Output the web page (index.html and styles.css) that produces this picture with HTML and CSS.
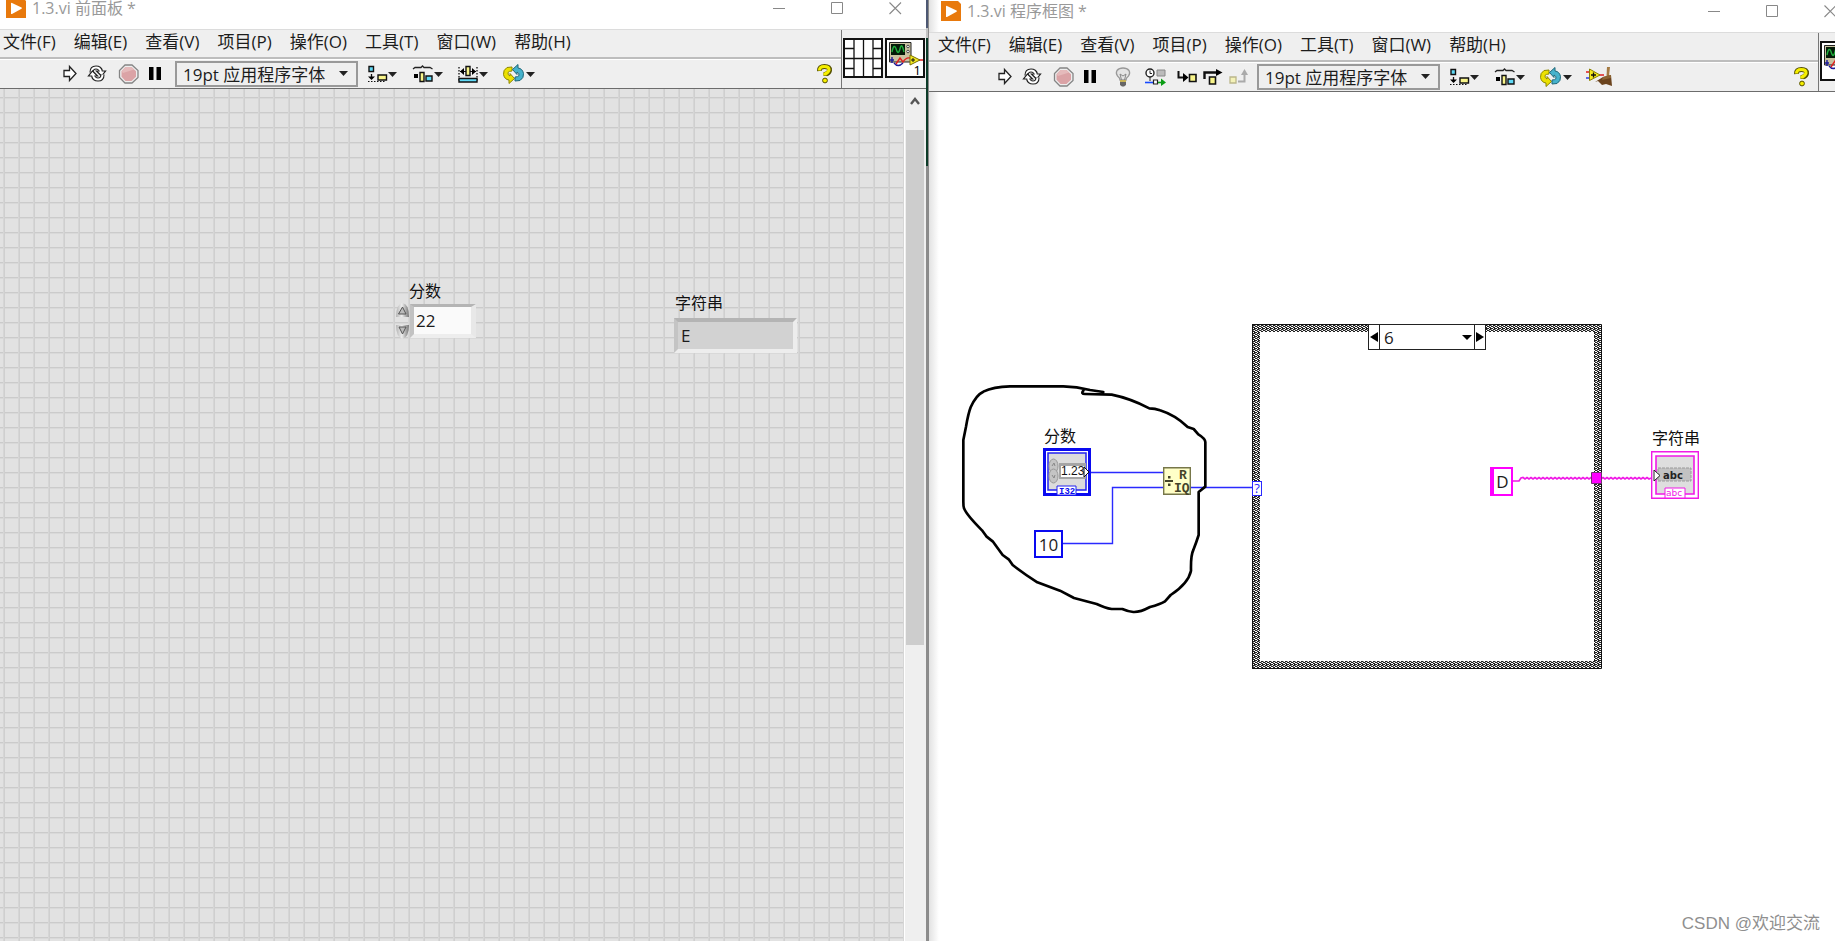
FILE: index.html
```html
<!DOCTYPE html>
<html lang="zh-CN">
<head>
<meta charset="utf-8">
<title>1.3.vi</title>
<link rel="stylesheet" href="styles.css">
</head>
<body>
<svg class="defs" aria-hidden="true">
  <defs>
    <g id="i-logo"><path d="M0 0H17L20 3V20H0Z" fill="#e8790c"/><path d="M5 5.500Q5 4.500 6 5L15.500 9.500Q16.500 10 15.500 10.800L6 16Q5 16.300 5 15.500Z" fill="#fff"/></g>
    <path id="i-run" d="M1 5.500H6.500V1.500L13 8.500L6.500 15.500V11.500H1Z" fill="#fff" stroke="#222" stroke-width="1.300"/>
    <g id="i-loop-half"><path d="M4.500 7.500Q4.500 2.500 9 2.500Q13 2.500 14 6" fill="none" stroke="#222" stroke-width="4.200"/><path d="M9.500 6H18.500L14.500 11Z" fill="#fff" stroke="#222" stroke-width="1.200"/><path d="M4.500 7.500Q4.500 2.500 9 2.500Q13 2.500 14 7" fill="none" stroke="#fff" stroke-width="2"/></g>
    <g id="i-loop"><use href="#i-loop-half"/><use href="#i-loop-half" transform="rotate(180 10 8.500)"/></g>
    <g id="i-stop"><path d="M8 1H15L21 6.500V13.500L15 19H8L2.500 13.500V6.500Z" fill="#eee" stroke="#858585" stroke-width="1.300"/><path d="M8.500 3H14.500L19 7.200V12.800L14.500 17H8.500L4.500 12.800V7.200Z" fill="#dba3a6"/><path d="M8.500 3H14.500L17 5.500L6 9L4.500 7.200Z" fill="#e5babb"/></g>
    <path id="i-pause" d="M0 0H4.500V13H0ZM7.500 0H12V13H7.500Z" fill="#000"/>
    <path id="i-down" d="M0 0H9L4.500 5Z" fill="#222"/>
    <g id="i-align"><path d="M1 1.500H5.500V6.500H1Z" fill="#5fd8f5" stroke="#111" stroke-width="1.400"/><path d="M3.500 9V14" stroke="#111" stroke-width="1.300"/><path d="M0 11.500H7L3.500 15Z"/><path d="M0 16.500H18" stroke="#111" stroke-dasharray="1.500 1.500"/><path d="M10 10H18.500V15H10Z" fill="#f8f48a" stroke="#111" stroke-width="1.400"/><use href="#i-down" x="20" y="7"/></g>
    <g id="i-dist"><path d="M0 4L2 2.500H8L9.500 1L11 2.500H17L19.500 4" fill="none" stroke="#222" stroke-width="1.300"/><path d="M1 9H5V13H1Z"/><path d="M7 7.500H11V16.500H7Z" fill="#f8f48a" stroke="#111" stroke-width="1.400"/><path d="M13 11H19V16H13Z" fill="#5fd8f5" stroke="#111" stroke-width="1.400"/><use href="#i-down" x="21" y="7"/></g>
    <g id="i-resize"><path d="M1 2V17M19 2V17" stroke="#111" stroke-width="1.300" stroke-dasharray="1.500 1.500"/><path d="M2 6.500H18" stroke="#111"/><path d="M2 6.500L6 3V10ZM18 6.500L14 3V10Z"/><path d="M8 1.500H12V10.500H8Z" fill="#f8f48a" stroke="#111" stroke-width="1.400"/><path d="M1 13.500H19V17H1Z" fill="#5fd8f5" stroke="#111" stroke-width="1.400"/><use href="#i-down" x="21" y="7"/></g>
    <path id="i-order-half" d="M9 3L4 3.500Q0 6 .5 10.500Q1.500 15.500 6 16V19.500L11.500 14.500L7 9.500V12Q4.500 11 5 8.500Q6 7 9 7Z"/>
    <g id="i-order"><use href="#i-order-half" fill="#ece100" stroke="#8c8600"/><use href="#i-order-half" transform="rotate(180 10.500 10)" fill="#45b2cc" stroke="#1f6778"/><use href="#i-down" x="23" y="8"/></g>
    <g id="i-help"><path d="M2.500 7Q2 2.500 7.500 2.500Q13 2.500 12.500 6.500Q12 9 9 10V12" fill="none" stroke="#555000" stroke-width="5"/><path d="M2.500 6.500Q2.500 2.500 7.300 2.500Q12.200 2.500 12 6Q11.500 8.500 8 10V11.500" fill="none" stroke="#f5ee00" stroke-width="3.200"/><circle cx="8" cy="16.500" r="2.400" fill="#f5ee00" stroke="#555000"/></g>
    <g id="i-vi"><path d="M1 1H39V39H1Z" fill="#fff" stroke="#111" stroke-width="2"/><path d="M4.500 4.500H26V24H4.500Z" fill="#c9c2a0" stroke="#222"/><path d="M6 6H20V17H6Z" fill="#041a08"/><path d="M7 14Q9 4 11.500 12Q13.500 18 15.500 9Q17 5 19 14" fill="none" stroke="#1fae3b" stroke-width="1.400"/><circle cx="23" cy="8.500" r="1.300" fill="#fff" stroke="#444"/><circle cx="23" cy="13.500" r="1.300" fill="#fff" stroke="#444"/><path d="M7 19V25M5 22H9M9 25Q13 30 18 25" fill="none" stroke="#1a1a9c" stroke-width="1.400"/><path d="M11 26L15 20L18 24Q21 19 25 20M33 22H38" fill="none" stroke="#e02020" stroke-width="1.400"/><path d="M25 17L35 22L25 27Z" fill="#f4ea20" stroke="#7a7000"/><path d="M26 22H30M28 20V24" stroke="#111"/></g>
    <g id="i-close"><path d="M.5 .5L12 12M12 .5L.5 12" stroke="#888" stroke-width="1.100"/></g>
    <pattern id="weave" width="4" height="4" patternUnits="userSpaceOnUse"><path d="M0 0H4V4H0Z" fill="#222"/><path d="M0 1h1v1h-1ZM1 0h1v1h-1ZM2 2h1v1h-1ZM3 3h1v1h-1ZM0 3h1v1h-1Z" fill="#fff"/><path d="M1 2h1v1h-1ZM3 1h1v1h-1Z" fill="#999"/></pattern>
  </defs>
</svg>

<div class="desktop">
  <section class="window panel-window">
    <header class="titlebar">
      <svg class="logo" width="20" height="20"><use href="#i-logo"/></svg>
      <span class="title">1.3.vi 前面板 *</span>
      <div class="window-buttons">
        <button aria-label="最小化"><svg width="12" height="12"><path d="M0 6.500H12" stroke="#888"/></svg></button>
        <button aria-label="最大化"><svg width="12" height="12"><path d="M.5 .5H11.500V11.500H.5Z" fill="none" stroke="#888"/></svg></button>
        <button aria-label="关闭"><svg width="12" height="12"><use href="#i-close"/></svg></button>
      </div>
    </header>
    <div class="chrome">
      <div class="bars">
        <nav class="menubar">
          <button>文件(F)</button><button>编辑(E)</button><button>查看(V)</button><button>项目(P)</button><button>操作(O)</button><button>工具(T)</button><button>窗口(W)</button><button>帮助(H)</button>
        </nav>
        <div class="toolbar">
          <button aria-label="运行"><svg width="14" height="17"><use href="#i-run"/></svg></button>
          <button aria-label="连续运行"><svg width="20" height="17"><use href="#i-loop"/></svg></button>
          <button aria-label="中止"><svg width="22" height="20"><use href="#i-stop"/></svg></button>
          <button aria-label="暂停"><svg width="12" height="13"><use href="#i-pause"/></svg></button>
          <label class="font-picker spaced"><select aria-label="字体"><option>19pt 应用程序字体</option></select><svg width="9" height="5"><use href="#i-down"/></svg></label>
          <button aria-label="对齐"><svg width="35" height="18"><use href="#i-align"/></svg></button>
          <button aria-label="分布"><svg width="35" height="18"><use href="#i-dist"/></svg></button>
          <button aria-label="调整大小"><svg width="35" height="18"><use href="#i-resize"/></svg></button>
          <button aria-label="重新排序"><svg width="35" height="20"><use href="#i-order"/></svg></button>
          <button class="help" aria-label="帮助"><svg width="15" height="20"><use href="#i-help"/></svg></button>
        </div>
      </div>
      <div class="vi-pane">
        <svg width="40" height="40"><path d="M1 1H39V39H1Z" fill="#fff" stroke="#111" stroke-width="2"/><path d="M11 1V39M20.500 1V39M30 1V39M1 20.500H39M1 10.500H11M1 30.500H11M30 10.500H39M30 30.500H39" stroke="#111" stroke-width="1.300"/></svg>
        <div class="vi-icon"><svg width="40" height="40"><use href="#i-vi"/></svg><span>1</span></div>
      </div>
    </div>
    <main class="panel-body">
      <div class="grid">
        <label class="label score-label" for="score">分数</label>
        <div class="numeric">
          <svg width="15" height="38"><defs><linearGradient id="knob"><stop stop-color="#b4b4b4"/><stop offset=".45" stop-color="#eee"/><stop offset="1" stop-color="#757575"/></linearGradient></defs><path d="M1 15Q1 2 7.500 1Q14 2 14 15Z" fill="url(#knob)"/><path d="M1 23H14Q14 35 7.500 37Q1 35 1 23Z" fill="url(#knob)"/><path d="M3.500 12L7.500 5L11 12ZM4 25H11L7.500 32Z" fill="#bbb" stroke="#555"/></svg>
          <input id="score" value="22">
        </div>
        <label class="label string-label" for="result">字符串</label>
        <input id="result" class="string-out" value="E" readonly>
      </div>
      <div class="scrollbar">
        <button aria-label="向上滚动"><svg width="10" height="8"><path d="M1 7L5 2L9 7" fill="none" stroke="#555" stroke-width="2.400"/></svg></button>
        <div class="thumb"></div>
      </div>
    </main>
  </section>

  <div class="divider"></div>

  <section class="window diagram-window">
    <header class="titlebar">
      <svg class="logo" width="20" height="20"><use href="#i-logo"/></svg>
      <span class="title">1.3.vi 程序框图 *</span>
      <div class="window-buttons">
        <button aria-label="最小化"><svg width="12" height="12"><path d="M0 6.500H12" stroke="#888"/></svg></button>
        <button aria-label="最大化"><svg width="12" height="12"><path d="M.5 .5H11.500V11.500H.5Z" fill="none" stroke="#888"/></svg></button>
        <button aria-label="关闭"><svg width="12" height="12"><use href="#i-close"/></svg></button>
      </div>
    </header>
    <div class="chrome">
      <div class="bars">
        <nav class="menubar">
          <button>文件(F)</button><button>编辑(E)</button><button>查看(V)</button><button>项目(P)</button><button>操作(O)</button><button>工具(T)</button><button>窗口(W)</button><button>帮助(H)</button>
        </nav>
        <div class="toolbar">
          <button aria-label="运行"><svg width="14" height="17"><use href="#i-run"/></svg></button>
          <button aria-label="连续运行"><svg width="20" height="17"><use href="#i-loop"/></svg></button>
          <button aria-label="中止"><svg width="22" height="20"><use href="#i-stop"/></svg></button>
          <button aria-label="暂停"><svg width="12" height="13"><use href="#i-pause"/></svg></button>
          <button aria-label="高亮显示执行过程"><svg width="29" height="20"><path d="M14 13Q14 11 11.500 9Q9.500 6 11 3.500Q13 1 17 1Q21 1 23 3.500Q24.500 6 22.500 9Q20 11 20 13Z" fill="#e4e4e4" stroke="#999" stroke-width="1.300"/><path d="M15.500 13L14 7L17 9L20 7L18.500 13" fill="none" stroke="#888"/><path d="M14 13H20V15H14Z" fill="#c9b458"/><path d="M14 15H20V18L18 19.500H16L14 18Z" fill="#666"/></svg></button>
          <button aria-label="保存连线值"><svg width="22" height="18"><circle cx="5" cy="5" r="4" fill="#fff" stroke="#222" stroke-width="1.400"/><path d="M5 2.500V5.500H7" stroke="#222" fill="none"/><path d="M12 2H20V8H12Z" fill="#bbb" stroke="#888"/><path d="M5 9V13" stroke="#222"/><path d="M0 14.500H8" stroke="#1649ff" stroke-width="1.600"/><path d="M8.500 12H12.500V16H8.500Z" fill="#fff" stroke="#222" stroke-width="1.200"/><path d="M13 14.500H17" stroke="#0a9c14" stroke-width="1.600"/><path d="M16 10.500L21 14.500L16 18Z" fill="#0a9c14"/></svg></button>
          <div class="steps">
            <button aria-label="单步步入"><svg width="20" height="16"><path d="M1.500 2V8.500H8" fill="none" stroke="#111" stroke-width="2"/><path d="M6 4L11.500 8.500L6 13Z"/><path d="M12.500 5.500H19V12.500H12.500Z" fill="#f8f48a" stroke="#111" stroke-width="1.600"/></svg></button>
            <button aria-label="单步步过"><svg width="20" height="16"><path d="M1.500 10V3.500H15" fill="none" stroke="#111" stroke-width="2.400"/><path d="M13 0L19.500 3.500L13 7Z"/><path d="M6.500 8H12.500V15H6.500Z" fill="#f8f48a" stroke="#111" stroke-width="1.600"/></svg></button>
            <button aria-label="单步步出"><svg width="18" height="16"><path d="M1 8H7V14H1Z" fill="#f4f2b8" stroke="#bbb68a" stroke-width="1.300"/><path d="M9 12.500H15.500V5" fill="none" stroke="#aaa" stroke-width="2"/><path d="M12 6L15.500 0L19 6Z" fill="#aaa"/></svg></button>
          </div>
          <label class="font-picker"><select aria-label="字体"><option>19pt 应用程序字体</option></select><svg width="9" height="5"><use href="#i-down"/></svg></label>
          <button aria-label="对齐"><svg width="35" height="18"><use href="#i-align"/></svg></button>
          <button aria-label="分布"><svg width="35" height="18"><use href="#i-dist"/></svg></button>
          <button aria-label="重新排序"><svg width="35" height="20"><use href="#i-order"/></svg></button>
          <button aria-label="整理程序框图"><svg width="28" height="20"><path d="M1 5H5M14 8H19" stroke="#e02020" stroke-width="1.400"/><path d="M1 11H5" stroke="#2030e0" stroke-width="1.400"/><path d="M4.500 2L15 8L4.500 13.500Z" fill="#f4ea20" stroke="#8a8000"/><path d="M6 8H11M8.500 5.500V10.500" stroke="#111" stroke-width="1.300"/><path d="M22 0H25L24 9H21.500Z" fill="#a47a42"/><path d="M18 10L26 8L27 19L21 17L17 18L13 14L10 15Z" fill="#6b431d"/><path d="M18 10L26 8V11L17 13Z" fill="#8d6433"/></svg></button>
          <button class="help" aria-label="帮助"><svg width="15" height="20"><use href="#i-help"/></svg></button>
        </div>
      </div>
      <div class="vi-pane">
        <div class="vi-icon"><svg width="40" height="40"><use href="#i-vi"/></svg></div>
      </div>
    </div>
    <main class="diagram">
      <svg class="wires" width="800" height="560">
        <path d="M161 380.500H234M134 451.500H183.500V395.500H234M262 395.500H324" fill="none" stroke="#2a2aff" stroke-width="1.400"/>
        <g transform="translate(21 278) scale(.33333)"><path d="M400 62Q392 72 405 72L485 74Q540 85 598 115Q615 115 630 121Q675 135 713 171L731 177L745 193Q765 205 766 216V350L746 366V495Q738 520 730 540Q722 555 723 602Q715 640 662 675L645 694Q630 703 600 711Q570 727 550 726Q535 725 517 717H485Q465 714 440 702L372 684L330 662L262 637Q220 610 188 585L176 568L158 555L128 514L109 499L96 481Q50 435 42 415Q40 410 40 395V210L48 170Q55 130 62 112Q78 75 100 65Q130 50 180 49H340Q380 49 420 60L460 66" fill="none" stroke="#000" stroke-width="8" stroke-linejoin="round" stroke-linecap="round"/></g>
      </svg>

      <span class="label node-score-label">分数</span>
      <svg class="node-score" width="48" height="48"><path d="M1.500 1.500H46.500V46.500H1.500Z" fill="#fff" stroke="#0a0af0" stroke-width="3"/><path d="M5 5H43V42H5Z" fill="#dcdcdc" stroke="#2222f0" stroke-width="1.500"/><path d="M16 15H43V31H16Z" fill="#a5a5a5"/><path d="M18 18H41V29H18Z" fill="#fff"/><ellipse cx="10.500" cy="18" rx="4.500" ry="7" fill="#c4c4c4" stroke="#999"/><ellipse cx="10.500" cy="28" rx="4.500" ry="7" fill="#c4c4c4" stroke="#999"/><path d="M9 18L11 15L12 18M9 27L11 30L12 27" fill="none" stroke="#888"/><path d="M41 19L46 24L41 29Z" fill="#fff" stroke="#111"/><path d="M14 38H33V47H14Z" fill="#fff" stroke="#2222f0"/><text class="t-numeric" x="18" y="27">1.23</text><text class="t-type" x="16" y="46">I32</text></svg>
      <input class="const-ten" aria-label="常量" value="10">
      <svg class="node-divide" width="28" height="28"><path d="M.7 .7H27.300V27.300H.7Z" fill="#ffffc8" stroke="#77774a" stroke-width="1.400"/><path d="M2 14H10" stroke="#44442a" stroke-width="2"/><path d="M5 9h2.500v2.500h-2.500ZM5 16.500h2.500v2.500h-2.500Z" fill="#44442a"/><text class="t-fn" x="16" y="12">R</text><text class="t-fn" x="11" y="25">IQ</text></svg>

      <div class="case">
        <svg class="case-frame" width="350" height="345"><path d="M0 0H350V345H0ZM8 8V337H342V8Z" fill="url(#weave)" fill-rule="evenodd"/><path d="M.5 .5H349.500V344.500H.5Z" fill="none" stroke="#111"/></svg>
        <div class="case-selector">
          <button aria-label="上一分支"><svg width="8" height="10"><path d="M8 0V10L0 5Z"/></svg></button>
          <label><select aria-label="分支"><option>6</option></select><svg width="10" height="5"><path d="M0 0H10L5 5Z"/></svg></label>
          <button aria-label="下一分支"><svg width="8" height="10"><path d="M0 0V10L8 5Z"/></svg></button>
        </div>
        <span class="case-terminal">?</span>
      </div>
      <svg class="string-wire" width="140" height="12"><path d="M0 9H6L8 6L10 5.500L12 7L14 5.500L16 7L18 5.500L20 7L22 5.500L24 7L26 5.500L28 7L30 5.500L32 7L34 5.500L36 7L38 5.500L40 7L42 5.500L44 7L46 5.500L48 7L50 5.500L52 7L54 5.500L56 7L58 5.500L60 7L62 5.500L64 7L66 5.500L68 7L70 5.500L72 7L74 5.500L76 7L78 5.500L80 7L82 5.500L84 7L86 5.500L88 7L90 5.500L92 7L94 5.500L96 7L98 5.500L100 7L102 5.500L104 7L106 5.500L108 7L110 5.500L112 7L114 5.500L116 7L118 5.500L120 7L122 5.500L124 7L126 5.500L128 7L130 5.500L132 7L134 5.500L136 7L138 6" fill="none" stroke="#f01ae6" stroke-width="1.700"/><path d="M78.500 .5H88.500V11.500H78.500Z" fill="#f0f" stroke="#703070"/></svg>
      <input class="const-d" aria-label="字符串常量" value="D">
      <span class="label node-string-label">字符串</span>
      <svg class="node-string" width="48" height="48"><path d="M.7 .7H47.300V47.300H.7Z" fill="#fff" stroke="#f01ae6" stroke-width="1.400"/><path d="M5 5H43V43H5Z" fill="#dedede" stroke="#f01ae6" stroke-width="1.600"/><path d="M7 17H40V30H7Z" fill="#c2c2c2" stroke="#999" stroke-dasharray="3 1"/><path d="M3 19L9 24.500L3 30Z" fill="#fff" stroke="#222"/><path d="M14 37H34V47H14Z" fill="#fff" stroke="#f01ae6"/><text class="t-abc" x="12" y="28">abc</text><text class="t-abc-type" x="15" y="45">abc</text></svg>
      <span class="watermark">CSDN @欢迎交流</span>
    </main>
  </section>
</div>
</body>
</html>
```
FILE: styles.css
```css
* { box-sizing: border-box; }
body {
  margin: 0;
  font: 17px/24px "Open Sans", "Noto Sans CJK SC", sans-serif;
  color: #1c1c1c;
  background: #fff;
}
button, input, select { font: inherit; color: inherit; margin: 0; padding: 0; border: 0; background: none; border-radius: 0; }
select { appearance: none; }
svg { display: block; flex-shrink: 0; overflow: visible; }
.defs { position: absolute; width: 0; height: 0; }

.desktop { display: grid; grid-template-columns: 926fr 3px 906fr; height: 100vh; overflow: hidden; }
.window { display: flex; flex-direction: column; min-width: 0; overflow: hidden; background: #fff; }
.divider { background: linear-gradient(#4d5873 0 28px, #c4c4c4 28px 38px, #0c3b28 38px 166px, #8c8c8c 166px); border-right: 1px solid #8a8a8a; }
.diagram-window { background: linear-gradient(90deg, #e2e2e2, #fff 10px); }

.titlebar { display: flex; align-items: center; height: 29px; padding: 0 25px 13px 6px; color: #999; }
.diagram-window .titlebar { height: 32px; padding: 0 0 10px 12px; }
.title { margin-left: 6px; font-size: 16px; line-height: 16px; white-space: nowrap; }
.window-buttons { display: flex; gap: 46px; margin-left: auto; }
.window-buttons button { display: block; width: 12px; }
.diagram-window .window-buttons { margin-right: -1px; }

.chrome { display: flex; background: #efefef; border-top: 1px solid #dcdcdc; border-bottom: 1px solid #6c6c6c; height: 60px; }
.bars { flex: 1; min-width: 0; }
.menubar { display: flex; align-items: center; gap: 18px; height: 29px; padding: 0 0 3px 3px; border-bottom: 2px solid #bdbdbd; }
.menubar button { white-space: nowrap; }
.toolbar { display: flex; align-items: center; gap: 10px; height: 29px; padding: 0 9px 1px 63px; border-top: 1px solid #fff; }
.diagram-window .menubar { padding-left: 9px; }
.diagram-window .toolbar { padding-left: 69px; }
.steps { display: flex; gap: 6px; }
.help { margin-left: auto; }
.font-picker { position: relative; width: 183px; height: 26px; border: 2px solid #999; }
.font-picker.spaced { margin-left: 4px; }
.font-picker select { display: block; width: 100%; height: 22px; padding: 1px 0 0 6px; line-height: 22px; }
.font-picker svg { position: absolute; right: 8px; top: 8px; pointer-events: none; }

.vi-pane { display: flex; align-items: flex-start; gap: 2px; width: 85px; padding: 8px 0 0 1px; border-left: 1px solid #777; }
.diagram-window .vi-pane { width: 17px; overflow: hidden; }
.vi-icon { position: relative; }
.vi-icon span { position: absolute; right: 4px; bottom: 1px; font-size: 13px; line-height: 14px; color: #000; }

.panel-body { flex: 1; display: flex; min-height: 0; }
.grid {
  flex: 1;
  position: relative;
  background-color: #e2e2e2;
  background-image: linear-gradient(90deg, #d6d6d6 1px, #cfcfcf 1px 2px, transparent 2px), linear-gradient(#cbcbcb 1px, #d9d9d9 1px 2px, transparent 2px);
  background-size: 15px 15px;
  background-position: 3px 8px;
}
.label { position: absolute; font-size: 16px; line-height: 20px; color: #111; white-space: nowrap; }
.score-label { left: 409px; top: 192px; }
.numeric { position: absolute; left: 395px; top: 213px; display: flex; align-items: flex-start; }
.numeric input { width: 66px; height: 34px; margin-top: 2px; padding-left: 2px; background: #fafafa; border: solid; border-width: 3px 5px 4px 4px; border-color: #b4b4b4 #e8e8e8 #ededed #c2c2c2; }
.string-label { left: 675px; top: 204px; }
.string-out { position: absolute; left: 674px; top: 229px; width: 123px; height: 35px; padding-left: 3px; background: #d2d2d2; border: 4px solid; border-color: #b4b4b4 #ededed #ededed #c4c4c4; }

.scrollbar { width: 22px; padding: 0 2px 0 1px; background: #efefef; border-left: 1px solid #fff; }
.scrollbar button { display: flex; align-items: center; justify-content: center; width: 100%; height: 23px; }
.scrollbar .thumb { height: 60.4%; margin-top: 18px; background: #cdcdcd; }

.diagram { flex: 1; position: relative; }
.wires, .case, .case-frame, .node-score, .node-divide, .node-string, .string-wire, .const-ten, .const-d, .watermark { position: absolute; }
.wires { left: 0; top: 0; }
.node-score-label { left: 115px; top: 334px; }
.node-score { left: 114px; top: 356px; }
.const-ten { left: 105px; top: 438px; width: 29px; height: 28px; border: 2px solid #0a0af0; background: #fff; text-align: center; }
.node-divide { left: 234px; top: 375px; }
.case { left: 323px; top: 232px; width: 350px; height: 345px; }
.case-frame { left: 0; top: 0; }
.case-selector { position: absolute; left: 116px; top: 0; display: flex; width: 118px; height: 26px; border: 1px solid #222; background: #fff; }
.case-selector button { width: 10px; display: flex; align-items: center; justify-content: center; }
.case-selector label { flex: 1; position: relative; border: solid #222; border-width: 0 1px; }
.case-selector select { display: block; width: 100%; height: 24px; padding: 1px 0 0 4px; }
.case-selector label svg { position: absolute; right: 2px; top: 10px; pointer-events: none; }
.case-terminal { position: absolute; left: 0; top: 157px; width: 10px; height: 15px; border: 1px solid #2a2aff; background: #fff; color: #2a2aff; font-size: 13px; line-height: 13px; text-align: center; }
.string-wire { left: 584px; top: 380px; }
.const-d { left: 561px; top: 375px; width: 23px; height: 29px; border: 2px solid #f0f; border-left-width: 4px; background: #fff; text-align: center; }
.node-string-label { left: 723px; top: 336px; }
.node-string { left: 722px; top: 359px; }
.watermark { right: 15px; bottom: 5px; font: 17px/24px "Liberation Sans", "Noto Sans CJK SC", sans-serif; color: #8f8f8f; white-space: nowrap; }

.t-numeric { font: 12px "Liberation Sans", sans-serif; fill: #111; }
.t-type { font: bold 9px "Liberation Mono", monospace; fill: #0a0af0; }
.t-fn { font: bold 13px "Liberation Mono", monospace; fill: #44442a; }
.t-abc { font: bold 10px "DejaVu Sans", sans-serif; fill: #222; }
.t-abc-type { font: 9px "DejaVu Sans", sans-serif; fill: #f01ae6; }
```
